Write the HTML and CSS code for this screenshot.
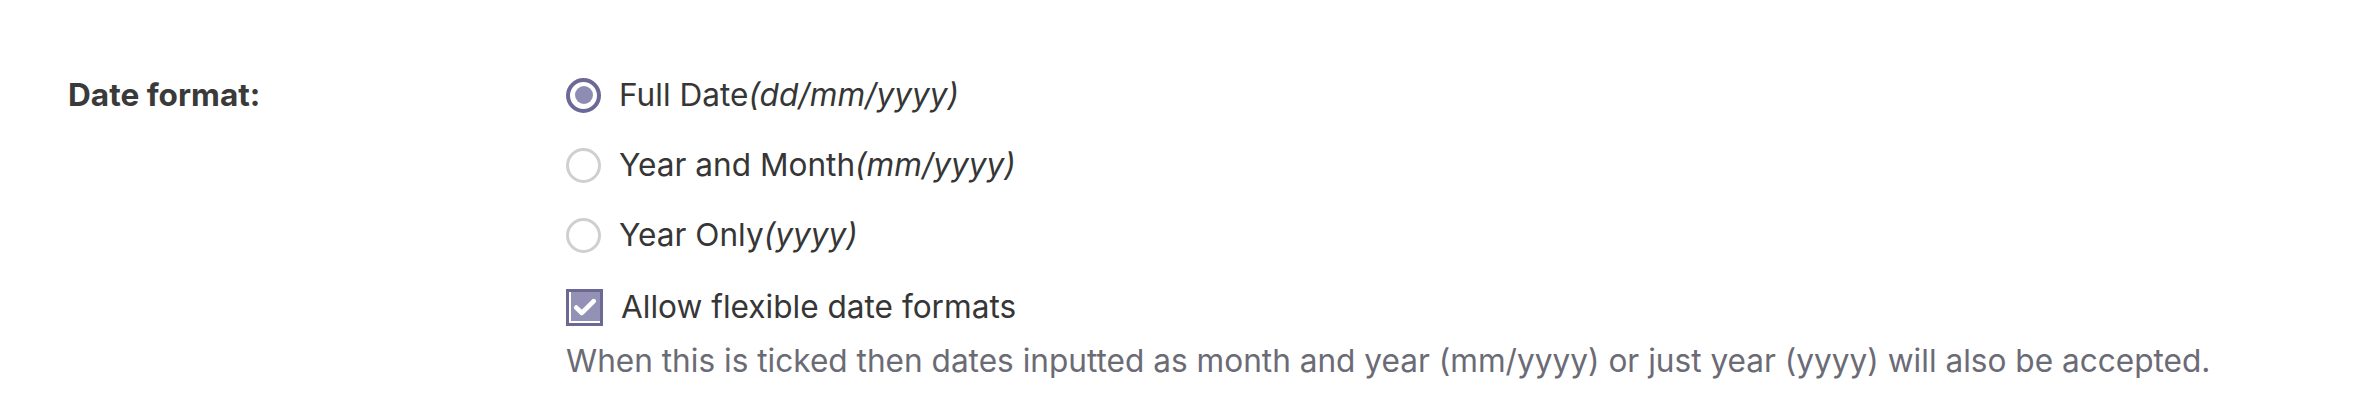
FILE: index.html
```html
<!DOCTYPE html>
<html>
<head>
  <title>Date format</title>
  <link rel="stylesheet" href="styles.css">
</head>

<body>

  <div id="setting">

    <div class="label">Date format:</div>

    <div class="options">

      <label class="option">
        <span class="radio checked"></span>
        <span>Full Date<em>(dd/mm/yyyy)</em></span>
      </label>

      <label class="option">
        <span class="radio"></span>
        <span>Year and Month<em>(mm/yyyy)</em></span>
      </label>

      <label class="option">
        <span class="radio"></span>
        <span>Year Only<em>(yyyy)</em></span>
      </label>

      <label class="option check-row">
        <span class="checkbox">
          <svg viewBox="0 0 24 24" width="28" height="28">
            <path d="M4.5 12.5l4.8 4.6L19.5 7" fill="none" stroke="#fff" stroke-width="4" stroke-linecap="round" stroke-linejoin="round"/>
          </svg>
        </span>
        <span>Allow flexible date formats</span>
      </label>

      <p class="hint">When this is ticked then dates inputted as month and year (mm/yyyy) or just year (yyyy) will also be accepted.</p>

    </div>
  </div>

</body>
</html>
```

FILE: styles.css
```css
*{
  padding: 0;
  margin: 0;
  box-sizing: border-box;
}

body{
  background-color: #FFF;
  font-family: Inter, "Noto Sans", sans-serif;
  font-size: 31.6px;
  color: #363636;
}

#setting{
  display: flex;
  padding-top: 76px;
  padding-left: 68px;
}

.label{
  width: 498px;
  font-weight: 700;
  line-height: 38px;
  color: #3a3a3a;
}

.options{
  display: flex;
  flex-direction: column;
  gap: 32px;
}

.option{
  display: flex;
  align-items: center;
  gap: 18px;
  line-height: 38px;
}

.option em{
  font-style: italic;
}

.radio{
  width: 35px;
  height: 35px;
  flex-shrink: 0;
  border-radius: 50%;
  border: 3px solid #cfcfcf;
  background-color: #FFF;
  display: inline-flex;
  align-items: center;
  justify-content: center;
}

.radio.checked{
  border: 4px solid #6c6998;
}

.radio.checked::after{
  content: "";
  width: 18px;
  height: 18px;
  border-radius: 50%;
  background-color: #8e8cb3;
}

.check-row{
  margin-top: 2px;
}

.checkbox{
  width: 37px;
  height: 37px;
  flex-shrink: 0;
  border: 3px solid #6b6896;
  background-color: #9391b5;
  box-shadow: inset 2px -2px 0 #FFF;
  display: inline-flex;
  align-items: center;
  justify-content: center;
}

.hint{
  margin-top: -16px;
  color: #6b6b76;
  line-height: 38px;
}
```
